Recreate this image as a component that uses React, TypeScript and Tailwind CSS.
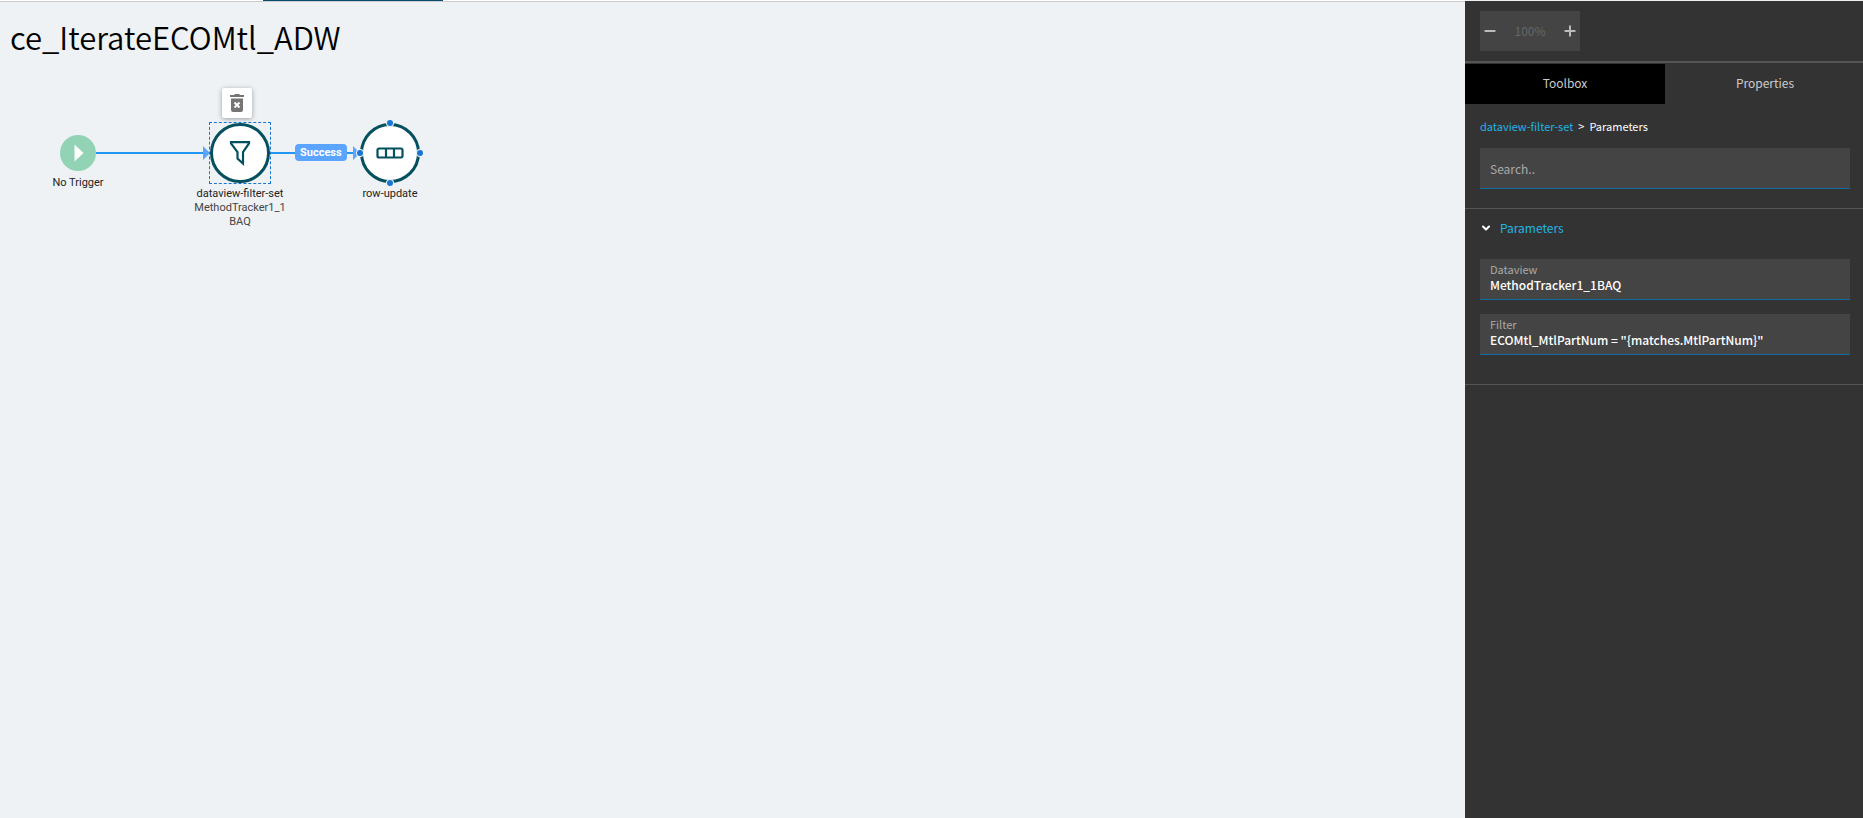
import { useState } from "react";
import { ChevronDown, Minus, Plus } from "lucide-react";
import clsx from "clsx";

interface FieldProps {
  id: string;
  label: string;
  defaultValue: string;
}

interface NodeLabelProps {
  title: string;
  detail?: string;
}

const TABS = ["Toolbox", "Properties"];

const NodeLabel = ({ title, detail }: NodeLabelProps) => (
  <p className="w-[92px] text-center text-[11px] leading-[14px] break-all text-[#222]">
    {title}
    {detail && <span className="block text-[#444]">{detail}</span>}
  </p>
);

const Port = ({ className }: { className: string }) => (
  <span
    className={clsx(
      "absolute size-1.5 rounded-full bg-[#1976d2] ring-1 ring-[#eef2f5]",
      className
    )}
  />
);

const Edges = () => (
  <svg className="absolute top-0 left-0" width="440" height="180" fill="none">
    <path d="M96 86H205M268 86H356" stroke="#2196f3" strokeWidth="2" />
    <path d="M203 79l7 7-7 7zM353 79l7 7-7 7z" fill="#5ba4ff" />
  </svg>
);

const FlowCanvas = () => (
  <div className="relative h-[180px] font-[Roboto,sans-serif]">
    <Edges />
    <div className="absolute top-[68px] left-8 flex w-[92px] flex-col items-center gap-[5px]">
      <svg width="36" height="36" viewBox="0 0 36 36">
        <circle cx="18" cy="18" r="18" fill="#92d3b5" />
        <path d="M14.5 9.5v17l9-8.5z" fill="#fff" />
      </svg>
      <NodeLabel title="No Trigger" />
    </div>

    <button
      aria-label="Delete node"
      className="absolute top-[21px] left-[222px] flex size-[30px] items-center justify-center rounded-xs bg-white shadow-[0_1px_5px_rgba(0,0,0,0.35)]"
    >
      <svg width="14" height="18" viewBox="0 0 14 18">
        <path
          d="M0 1h4l1-1h4l1 1h4v2H0zM1 4.500h12V16a2 2 0 0 1-2 2H3a2 2 0 0 1-2-2z"
          fill="#757575"
        />
        <path d="M4.500 8.500l5 5M9.500 8.500l-5 5" stroke="#fff" strokeWidth="2" />
      </svg>
    </button>

    <div className="absolute top-[55px] left-[194px] flex w-[92px] flex-col items-center gap-[3px]">
      <div className="border border-dashed border-[#1976d2]">
        <div className="flex size-[60px] items-center justify-center rounded-full border-3 border-[#04505f] bg-white">
          <svg width="22" height="26" viewBox="0 0 22 26" fill="none">
            <path
              d="M2 2.200h18v1.300L14 12v11.500L8.500 18.500v-6.500L2 3.500z"
              stroke="#04505f"
              strokeWidth="2.200"
            />
          </svg>
        </div>
      </div>
      <NodeLabel title="dataview-filter-set" detail="MethodTracker1_1BAQ" />
    </div>

    <span className="absolute top-[77px] left-[295px] rounded-sm bg-[#5ba4ff] px-[5px] text-[11px] leading-[17px] font-bold text-white">
      Success
    </span>

    <div className="absolute top-14 left-[344px] flex w-[92px] flex-col items-center gap-1">
      <div className="relative flex size-[60px] items-center justify-center rounded-full border-3 border-[#04505f] bg-white">
        <svg width="28" height="12" viewBox="0 0 28 12" fill="none">
          <path
            d="M3 1.500h22a1.500 1.500 0 0 1 1.500 1.500v6a1.500 1.500 0 0 1-1.500 1.500H3A1.500 1.500 0 0 1 1.500 9V3A1.500 1.500 0 0 1 3 1.500zM10 1.500v9M18 1.500v9"
            stroke="#04505f"
            strokeWidth="2.200"
          />
        </svg>
        <Port className="-top-1.5 left-6" />
        <Port className="top-6 -right-1.5" />
        <Port className="-bottom-1.5 left-6" />
        <Port className="top-6 -left-1.5" />
      </div>
      <NodeLabel title="row-update" />
    </div>
  </div>
);

const Field = ({ id, label, defaultValue }: FieldProps) => (
  <div className="flex h-[41px] flex-col border-b border-[#0f6ba0] bg-[#444] px-2.5 pt-[3px]">
    <label htmlFor={id} className="text-[11px] leading-[14px] text-[#aaa]">
      {label}
    </label>
    <input
      id={id}
      defaultValue={defaultValue}
      className="w-full text-xs leading-[18px] font-medium text-white outline-none"
    />
  </div>
);

const SidePanel = () => {
  const [activeTab, setActiveTab] = useState("Toolbox");

  return (
    <aside className="mt-px w-[398px] shrink-0 overflow-hidden bg-[#333]">
      <div className="border-b-2 border-[#555] px-[15px] py-2.5">
        <div className="flex h-10 w-[100px] items-center justify-between bg-[#444] px-0.5 text-[#bbb]">
          <button aria-label="Zoom out">
            <Minus className="size-4" strokeWidth={3} />
          </button>
          <span className="text-xs leading-5 text-[#666]">100%</span>
          <button aria-label="Zoom in">
            <Plus className="size-4" strokeWidth={3} />
          </button>
        </div>
      </div>

      <div className="mt-px flex" role="tablist">
        {TABS.map((tab) => (
          <button
            key={tab}
            role="tab"
            aria-selected={tab === activeTab}
            onClick={() => setActiveTab(tab)}
            className={clsx(
              "h-10 w-[200px] shrink-0 pb-0.5 text-xs text-[#ccc]",
              tab === activeTab && "bg-black"
            )}
          >
            {tab}
          </button>
        ))}
      </div>

      <div className="flex flex-col gap-3.5 border-b border-[#555] pt-3.5 pr-[13px] pb-[19px] pl-[15px]">
        <nav className="flex gap-[5px] text-[11px] leading-4 text-white">
          <a href="#dataview-filter-set" className="text-[#1fb5e6]">
            dataview-filter-set
          </a>
          <span>&gt;</span>
          <span>Parameters</span>
        </nav>
        <input
          type="text"
          aria-label="Search"
          placeholder="Search.."
          className="h-[41px] w-full border-b border-[#0f6ba0] bg-[#444] px-2.5 text-xs text-white outline-none placeholder:text-[#aaa]"
        />
      </div>

      <section className="border-b border-[#555] pt-[11px] pr-[13px] pb-[29px] pl-[15px]">
        <button className="flex items-center gap-2 text-xs leading-4 text-[#1fb5e6]">
          <ChevronDown className="size-3 text-white" strokeWidth={4} />
          Parameters
        </button>
        <div className="mt-[23px] flex flex-col gap-3.5">
          <Field id="dataview" label="Dataview" defaultValue="MethodTracker1_1BAQ" />
          <Field
            id="filter"
            label="Filter"
            defaultValue={'ECOMtl_MtlPartNum = "{matches.MtlPartNum}"'}
          />
        </div>
      </section>
    </aside>
  );
};

const App = () => {
  return (
    <div className="flex min-h-screen bg-[#eef2f5] font-['Noto_Sans_CJK_SC',sans-serif]">
      <main className="min-w-0 flex-1">
        <div className="h-0.5 border-b border-[#ccc] bg-white">
          <div className="ml-[263px] h-px w-[180px] bg-[#0b4a6f]" />
        </div>
        <h1 className="px-2.5 pt-[11px] pb-1.5 text-[31px] leading-[48px] font-[350] text-black">
          ce_IterateECOMtl_ADW
        </h1>
        <FlowCanvas />
      </main>
      <SidePanel />
    </div>
  );
};

export default App;
